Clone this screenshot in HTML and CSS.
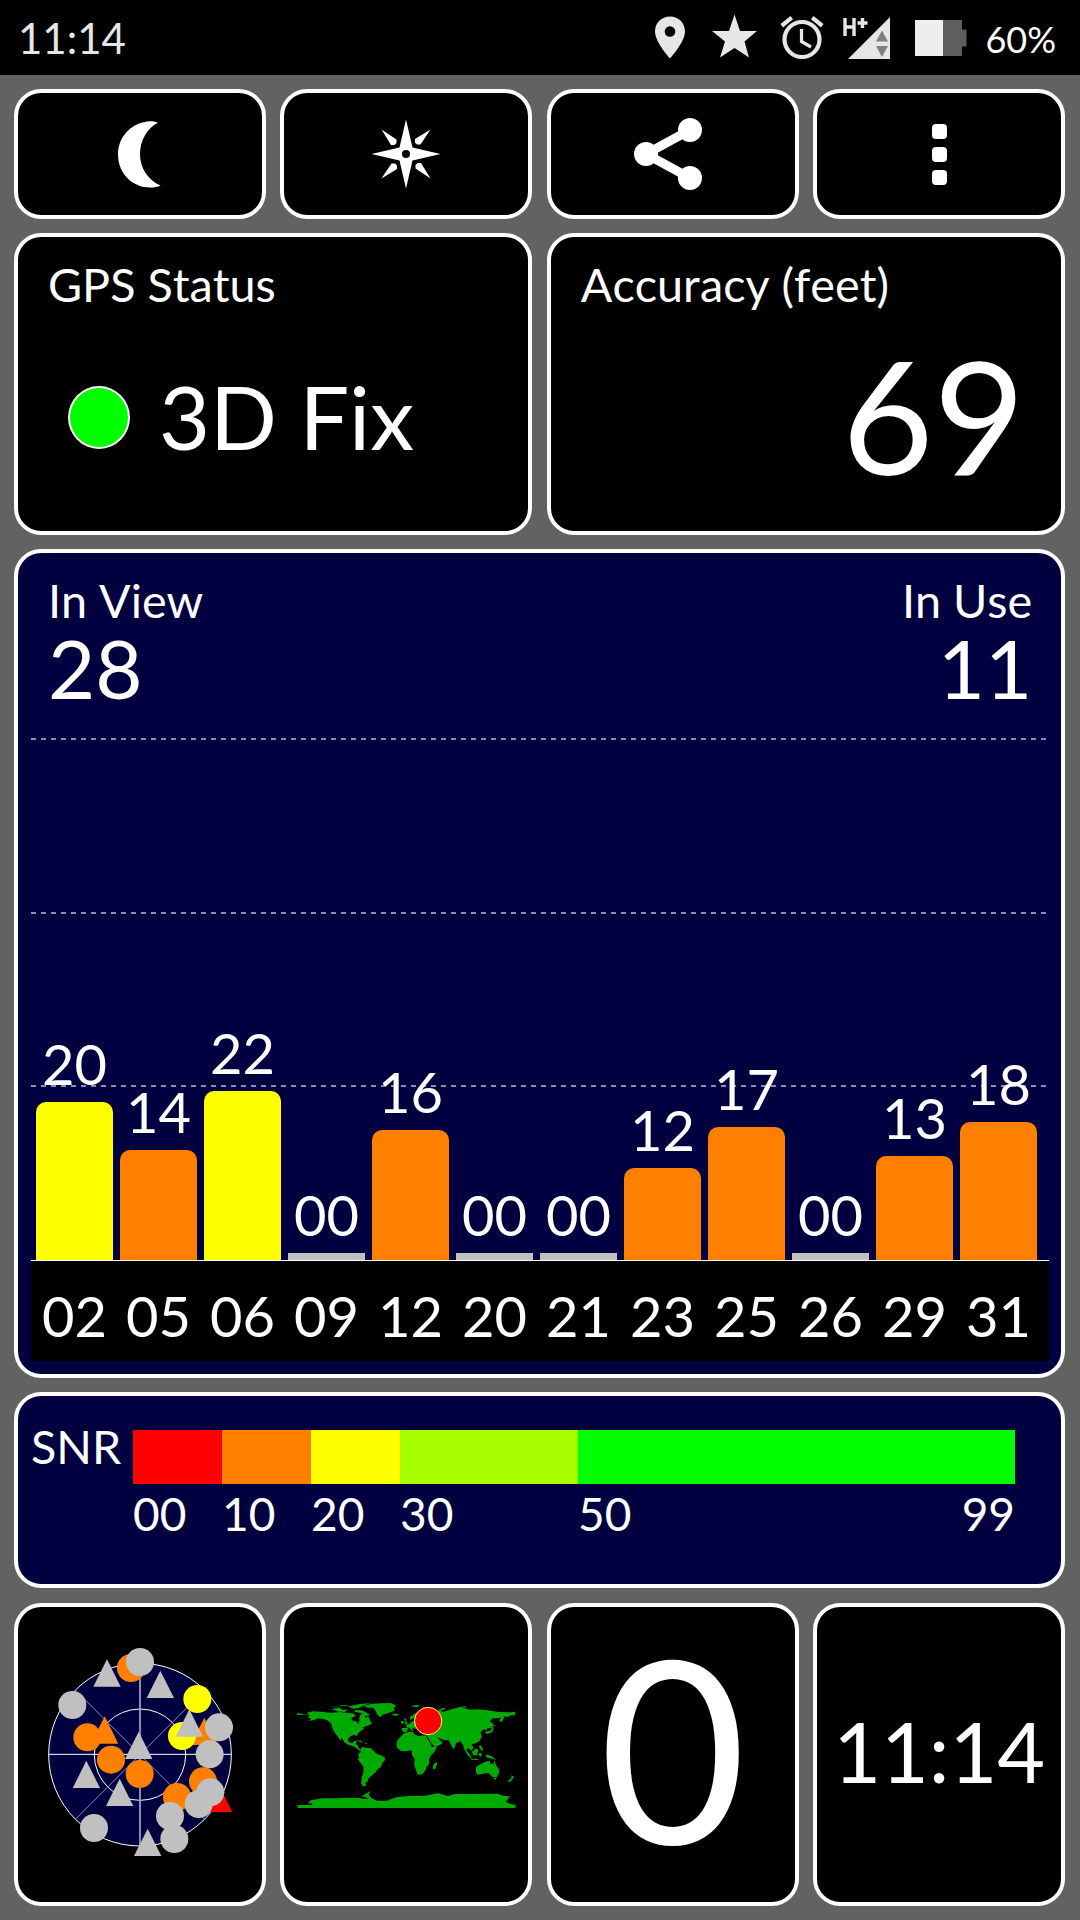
FILE: index.html
```html
<!DOCTYPE html>
<html lang="en">
<head>
    <meta charset="UTF-8">
    <meta name="viewport" content="width=device-width, initial-scale=1.0">
    <title>GPS Status</title>
    <link rel="stylesheet" href="styles.css">
</head>
<body>
    <!-- Status Bar -->
    <div class="status-bar">
        <span class="clock">11:14</span>
        <svg class="status-icons" viewBox="650 0 320 75" width="320" height="75">
            <g fill="#e6e6e6">
                <path fill-rule="evenodd" d="M670 16.500C661.500 16.500 655 23 655 31.500C655 42 670 58.500 670 58.500S685 42 685 31.500C685 23 678.500 16.500 670 16.500ZM670 26.200A5.300 5.300 0 1 1 670 36.800A5.300 5.300 0 1 1 670 26.200Z"/>
                <path d="M734.500 14.500L740 31H757L744.500 41.500L749 57.500L734.500 48L720 57.500L725 41.500L712 31H729Z"/>
                <path d="M780.500 24L790.500 16L793 19.200L783 27.500ZM823.500 24L813.500 16L811 19.200L821 27.500Z"/>
                <path d="M848 59H890V17Z"/>
            </g>
            <circle cx="802" cy="39.500" r="17.500" fill="none" stroke="#e6e6e6" stroke-width="4.200"/>
            <path d="M801.500 29V41.500L811 47" fill="none" stroke="#e6e6e6" stroke-width="3.200"/>
            <path d="M845 18V36M854 18V36M845 27H854M862.500 18V28M857.500 23H867.500" fill="none" stroke="#e6e6e6" stroke-width="3.400"/>
            <path d="M876 41.500H888L882 30.500ZM876 46H888L882 57Z" fill="#7f7f7f"/>
            <path d="M943 20H962V29.500H966.500V46.500H962V56H943Z" fill="#5e5e5e"/>
            <path d="M915 20H943V56H915Z" fill="#eee"/>
        </svg>
        <span class="battery">60%</span>
    </div>

    <div class="dashboard">
        <!-- Toolbar -->
        <div class="tile tool">
            <svg viewBox="0 0 80 80" width="80" height="80">
                <path d="M58 8.500C53 7 48 7 45 8C31 10 18 23 18 40.500C18 60 33 73.500 50 73.500C54 73.500 58 73 60.500 71.500C48 66 40 54 40 40C40 27 47 14 58 8.500Z" fill="#fff"/>
            </svg>
        </div>
        <div class="tile tool">
            <svg viewBox="0 0 80 80" width="80" height="80">
                <g fill="#fff">
                    <path d="M40 5.500L46.500 33.500L74.500 40L46.500 46.500L40 74.500L33.500 46.500L5.500 40L33.500 33.500Z"/>
                    <path id="ray" d="M15.500 15.500L30.500 25.500L30.500 29L28.500 31H25Z"/>
                    <use href="#ray" transform="rotate(90 40 40)"/>
                    <use href="#ray" transform="rotate(180 40 40)"/>
                    <use href="#ray" transform="rotate(270 40 40)"/>
                </g>
                <circle cx="40" cy="40" r="4" fill="#000"/>
            </svg>
        </div>
        <div class="tile tool">
            <svg viewBox="0 0 80 80" width="80" height="80">
                <path d="M57 16L13 40L57 64" fill="none" stroke="#fff" stroke-width="9"/>
                <g fill="#fff">
                    <circle cx="57" cy="16" r="12"/>
                    <circle cx="13" cy="40" r="12"/>
                    <circle cx="57" cy="64" r="12"/>
                </g>
            </svg>
        </div>
        <div class="tile tool">
            <div class="menu-dots">
                <span></span>
                <span></span>
                <span></span>
            </div>
        </div>

        <!-- Fix and Accuracy -->
        <div class="tile wide">
            <div class="label">GPS Status</div>
            <div class="fix">
                <span class="led"></span>
                <span>3D Fix</span>
            </div>
        </div>
        <div class="tile wide">
            <div class="label">Accuracy (feet)</div>
            <div class="accuracy">69</div>
        </div>

        <!-- Satellites -->
        <div class="tile full blue chart">
            <div class="counts">
                <div>
                    <div class="label">In View</div>
                    <div class="count">28</div>
                </div>
                <div class="right">
                    <div class="label">In Use</div>
                    <div class="count">11</div>
                </div>
            </div>
            <div class="plot">
                <div class="sat yellow"><span>20</span><i style="height: 158px"></i></div>
                <div class="sat orange"><span>14</span><i style="height: 110px"></i></div>
                <div class="sat yellow"><span>22</span><i style="height: 169px"></i></div>
                <div class="sat"><span>00</span><i style="height: 7px"></i></div>
                <div class="sat orange"><span>16</span><i style="height: 130px"></i></div>
                <div class="sat"><span>00</span><i style="height: 7px"></i></div>
                <div class="sat"><span>00</span><i style="height: 7px"></i></div>
                <div class="sat orange"><span>12</span><i style="height: 92px"></i></div>
                <div class="sat orange"><span>17</span><i style="height: 133px"></i></div>
                <div class="sat"><span>00</span><i style="height: 7px"></i></div>
                <div class="sat orange"><span>13</span><i style="height: 104px"></i></div>
                <div class="sat orange"><span>18</span><i style="height: 138px"></i></div>
            </div>
            <div class="axis">
                <span>02</span><span>05</span><span>06</span><span>09</span><span>12</span><span>20</span>
                <span>21</span><span>23</span><span>25</span><span>26</span><span>29</span><span>31</span>
            </div>
        </div>

        <!-- SNR Scale -->
        <div class="tile full blue snr">
            <div class="label">SNR</div>
            <div class="scale">
                <div class="step red">00</div>
                <div class="step orange">10</div>
                <div class="step yellow">20</div>
                <div class="step lime">30</div>
                <div class="step green"><span>50</span><span>99</span></div>
            </div>
        </div>

        <!-- Bottom Tiles -->
        <div class="tile small">
            <svg class="sky" viewBox="0 0 660 690" width="220" height="230">
                <defs>
                    <circle id="c" r="42"/>
                    <path id="t" d="M0 -41L41 41H-41Z"/>
                </defs>
                <g fill="none" stroke="#fff" stroke-width="3">
                    <circle cx="330" cy="344" r="274" fill="#000040"/>
                    <circle cx="330" cy="344" r="137"/>
                    <path d="M56 343H604"/>
                    <path d="M330 70V618" stroke="#a6a6cc" stroke-width="5"/>
                    <path d="M136 150L524 538M524 150L136 538" stroke="#8c8cc0"/>
                </g>
                <g fill="#ff8000">
                    <use href="#c" x="303" y="84"/>
                    <use href="#c" x="172" y="292"/>
                    <use href="#t" x="224" y="270"/>
                    <use href="#c" x="243" y="359"/>
                    <use href="#c" x="329" y="402"/>
                    <use href="#t" x="523" y="274"/>
                    <use href="#c" x="519" y="424"/>
                    <use href="#c" x="441" y="471"/>
                </g>
                <use href="#t" x="566" y="475" fill="#f00"/>
                <g fill="#ff0">
                    <use href="#c" x="502" y="177"/>
                    <use href="#c" x="456" y="288"/>
                </g>
                <g fill="#c0c0c0">
                    <use href="#c" x="330" y="66"/>
                    <use href="#t" x="231" y="99"/>
                    <use href="#t" x="391" y="133"/>
                    <use href="#c" x="127" y="195"/>
                    <use href="#t" x="478" y="249"/>
                    <use href="#c" x="567" y="262"/>
                    <use href="#t" x="326" y="316"/>
                    <use href="#c" x="539" y="343"/>
                    <use href="#t" x="169" y="403"/>
                    <use href="#t" x="269" y="457"/>
                    <use href="#c" x="541" y="457"/>
                    <use href="#c" x="506" y="492"/>
                    <use href="#c" x="420" y="528"/>
                    <use href="#c" x="192" y="564"/>
                    <use href="#c" x="433" y="597"/>
                    <use href="#t" x="353" y="607"/>
                </g>
            </svg>
        </div>
        <div class="tile small">
            <svg class="map" viewBox="50 60 656 330" width="219" height="110">
                <g fill="#0a0">
                    <path d="M51 98L66 102L84 105L80 98L97 94L122 95L150 98L180 96L206 99L221 101L226 108L213 114L214 121L226 124L234 132L237 121L236 112L241 101L252 104L256 114L263 108L270 124L275 130L266 136L257 138L246 143L251 147L240 153L233 160L228 170L225 164L212 167L204 174L203 184L210 189L219 187L222 182L229 184L226 192L232 196L234 204L241 209L237 212L228 205L218 199L205 195L193 188L188 180L182 173L181 180L186 186L178 179L173 171L166 162L158 150L154 139L152 130L140 121L125 116L112 115L101 120L84 123L92 117L82 111L88 106L72 104L51 105Z"/>
                    <path d="M154 88L176 83L188 90L201 88L194 96L174 95ZM201 80L223 75L243 71L271 70L252 76L236 83L222 86ZM224 89L244 91L259 98L269 106L254 108L242 99L222 95Z"/>
                    <path d="M250 78L270 72L302 70L329 69L347 76L340 84L342 92L324 99L307 104L299 112L291 105L286 94L279 83L262 83Z"/>
                    <path d="M336 101L352 101L355 105L344 108L336 105ZM226 179L240 182L249 188L239 186ZM252 188L262 191L254 192Z"/>
                    <path d="M240 206L246 201L260 204L272 205L282 215L289 222L302 226L314 233L312 243L305 250L302 260L292 267L286 276L277 284L269 290L263 296L262 304L255 308L256 318L248 319L242 311L244 292L249 276L249 261L241 250L232 238L236 231L233 223L240 217Z"/>
                    <path d="M371 159L389 155L398 156L401 163L413 168L436 166L439 174L448 187L454 201L470 200L462 215L450 228L445 239L446 252L438 260L435 270L426 283L412 284L404 264L401 250L403 239L395 225L393 211L378 213L363 214L350 203L348 193L351 181L359 172ZM468 245L470 252L464 268L457 266L458 255Z"/>
                    <path d="M366 155L364 144L381 143L375 134L386 132L393 125L403 123L401 115L388 119L388 111L402 101L423 89L440 96L452 97L471 97L475 91L489 96L513 88L540 80L567 89L591 88L621 91L656 96L692 97L704 95V106L690 106L684 110L671 110L668 120L661 127L656 121L661 113L650 114L634 116L628 124L638 131L635 142L619 146L619 154L612 148L605 151L600 158L604 170L597 183L585 190L573 193L579 204L573 212L562 203L558 212L568 223L566 227L552 209L549 198L540 184L527 189L523 202L519 207L511 194L505 181L491 180L474 174L468 170L484 185L485 191L464 202L453 190L440 169L438 157L420 158L413 153L420 145L410 142L403 147L396 143L397 155L384 142L379 156Z"/>
                    <path d="M370 114L377 116L377 124L383 130L372 133L375 125ZM362 123L370 123L368 131L361 130ZM613 157L631 151L635 140L640 143L635 157L620 162ZM638 134L648 138L637 139ZM552 210L569 225L575 236L564 229ZM574 215L588 205L594 211L589 226L578 226ZM596 219L604 220L602 232L595 226ZM617 223L634 229L648 240L636 237L617 232ZM571 236L594 237L593 240L572 239ZM594 198L601 196L609 210L604 213Z"/>
                    <path d="M587 260L600 253L614 245L628 243L630 251L638 253L641 241L648 258L656 268L656 279L647 293L635 290L624 278L607 281L591 284L586 275ZM637 295L648 294L644 300ZM692 286L701 291L690 305L680 305L693 294Z"/>
                    <path d="M51 375L94 375L96 370L82 371L90 361L126 355L172 355L197 353L237 354L248 356L266 357L249 349L240 351L255 341L272 332L264 343L272 353L289 362L318 362L350 351L388 348L430 348L471 340L503 348L523 342L575 342L614 341L651 341L671 348L689 349L682 357L677 366L690 372L705 374V384H51Z"/>
                    <path d="M389 78L411 75L420 78L407 82ZM471 89L491 83L496 86L479 92ZM155 80H180V82H155ZM178 76H202V78H178ZM541 78L560 80L552 83Z"/>
                </g>
                <circle cx="443" cy="123" r="41" fill="#f00" stroke="#ff4" stroke-width="3"/>
            </svg>
        </div>
        <div class="tile small speed">0</div>
        <div class="tile small time">11:14</div>
    </div>
</body>
</html>
```

FILE: styles.css
```css
* {
    margin: 0;
    padding: 0;
    box-sizing: border-box;
}

body {
    width: 1080px;
    height: 1920px;
    background: #626262;
    color: #fff;
    font-family: Lato, sans-serif;
    overflow: hidden;
}

/* Status bar */
.status-bar {
    display: flex;
    align-items: center;
    height: 75px;
    padding: 0 24px 0 18px;
    background: #000;
}

.clock {
    color: #e6e6e6;
    font-size: 42px;
    flex: 1;
}

.status-icons {
    margin-right: 15px;
}

.battery {
    font-size: 36px;
    line-height: 75px;
    padding-top: 3px;
}

/* Tiles */
.dashboard {
    display: grid;
    grid-template-columns: repeat(4, 252px);
    grid-template-rows: 130px 302px 829px 197px 303px;
    gap: 14px 14.400px;
    padding: 14px 0 0 14px;
}

.tile {
    background: #000;
    border: 4px solid #fff;
    border-radius: 27px;
}

.wide {
    grid-column: span 2;
    padding: 17px 30px;
}

.full {
    grid-column: span 4;
}

.blue {
    background: #000040;
}

.tool,
.small {
    display: flex;
    justify-content: center;
    align-items: center;
}

.label {
    font-size: 46.700px;
    line-height: 60px;
    font-kerning: none;
}

.menu-dots {
    display: flex;
    flex-direction: column;
    gap: 8px;
}

.menu-dots span {
    width: 15px;
    height: 15px;
    border-radius: 4px;
    background: #fff;
}

.fix {
    display: flex;
    align-items: center;
    gap: 29px;
    margin-top: 51px;
    padding-left: 20px;
    font-size: 88px;
    line-height: 102px;
}

.led {
    width: 62px;
    height: 63px;
    margin-top: 3px;
    border: 2px solid #fff;
    border-radius: 50%;
    background: #0f0;
}

.accuracy {
    margin-top: 8px;
    padding-right: 6px;
    font-size: 158px;
    line-height: 184px;
    text-align: right;
}

/* Satellite chart */
.chart {
    padding: 0 12px 0 13px;
}

.counts {
    display: flex;
    justify-content: space-between;
    height: 185px;
    padding: 17px 17px 0 17px;
}

.right {
    text-align: right;
}

.count {
    font-size: 81.500px;
    line-height: 75px;
}

.plot {
    display: flex;
    align-items: flex-end;
    gap: 7px;
    height: 523px;
    padding-left: 5px;
    border-bottom: 1px solid #fff;
    background-image:
        repeating-linear-gradient(to right, #8c8cb8 0 5px, transparent 5px 10px),
        repeating-linear-gradient(to right, #8c8cb8 0 5px, transparent 5px 10px),
        repeating-linear-gradient(to right, #8c8cb8 0 5px, transparent 5px 10px);
    background-repeat: no-repeat;
    background-size: 1016px 2px;
    background-position: 0 0, 0 174px, 0 347px;
}

.sat {
    width: 77px;
    text-align: center;
}

.sat span {
    display: block;
    font-size: 56px;
    line-height: 76px;
}

.sat i {
    display: block;
    background: #c0c0c0;
}

.sat.orange i {
    background: #ff8000;
    border-radius: 10px 10px 0 0;
}

.sat.yellow i {
    background: #ff0;
    border-radius: 10px 10px 0 0;
}

.axis {
    display: flex;
    gap: 7px;
    height: 100px;
    padding: 17px 0 0 5px;
    background: #000;
    font-size: 56px;
    line-height: 76px;
}

.axis span {
    width: 77px;
    text-align: center;
}

/* SNR scale */
.snr {
    display: flex;
    margin-bottom: 1px;
    padding: 20px 0 0 13px;
}

.snr > .label {
    width: 102px;
}

.scale {
    display: flex;
    margin-top: 14px;
}

.step {
    width: 89px;
    font-size: 46px;
    line-height: 60px;
}

.step::before {
    content: "";
    display: block;
    height: 54px;
    background: #f00;
}

.step.orange::before {
    background: #ff8000;
}

.step.yellow::before {
    background: #ff0;
}

.step.lime {
    width: 178px;
}

.step.lime::before {
    background: #a8ff00;
}

.step.green {
    display: flex;
    flex-wrap: wrap;
    align-content: flex-start;
    justify-content: space-between;
    width: 437px;
}

.step.green::before {
    width: 100%;
    background: #0f0;
}

/* Bottom tiles */
.sky,
.map {
    margin-top: 1px;
}

.speed {
    padding-bottom: 17px;
    font-size: 254px;
    line-height: 278px;
}

.time {
    padding-bottom: 7px;
    font-size: 82.500px;
}
```
